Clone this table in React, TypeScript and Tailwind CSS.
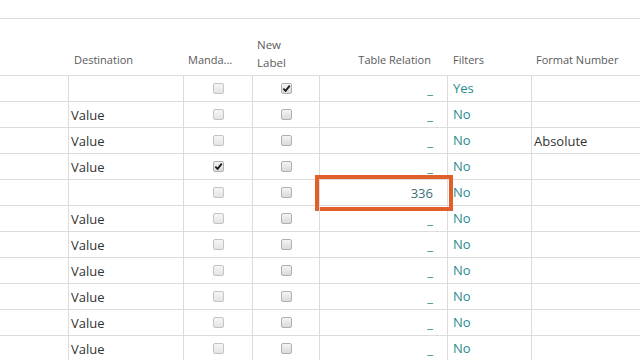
// Field mapping grid — mandatory / new label flags, relation and filters per row.

type Row = {
  dest: string
  mandatory: boolean
  newLabel: boolean
  relation: string
  filter: string
  format: string
  highlight?: boolean
}

const ROWS: Row[] = [
  { dest: '', mandatory: false, newLabel: true, relation: '_', filter: 'Yes', format: '' },
  { dest: 'Value', mandatory: false, newLabel: false, relation: '_', filter: 'No', format: '' },
  { dest: 'Value', mandatory: false, newLabel: false, relation: '_', filter: 'No', format: 'Absolute' },
  { dest: 'Value', mandatory: true, newLabel: false, relation: '_', filter: 'No', format: '' },
  { dest: '', mandatory: false, newLabel: false, relation: '336', filter: 'No', format: '', highlight: true },
  { dest: 'Value', mandatory: false, newLabel: false, relation: '_', filter: 'No', format: '' },
  { dest: 'Value', mandatory: false, newLabel: false, relation: '_', filter: 'No', format: '' },
  { dest: 'Value', mandatory: false, newLabel: false, relation: '_', filter: 'No', format: '' },
  { dest: 'Value', mandatory: false, newLabel: false, relation: '_', filter: 'No', format: '' },
  { dest: 'Value', mandatory: false, newLabel: false, relation: '_', filter: 'No', format: '' },
  { dest: 'Value', mandatory: false, newLabel: false, relation: '_', filter: 'No', format: '' },
]

function Checkbox({ checked, faded }: { checked: boolean; faded?: boolean }) {
  return (
    <span
      className={
        'flex size-[11px] items-center justify-center rounded-[2px] border ' +
        (faded
          ? 'border-[#c4c4c4] bg-gradient-to-b from-[#f6f6f6] to-[#e4e4e4]'
          : 'border-[#b0b0b0] bg-gradient-to-b from-[#f4f4f4] to-[#dadada]')
      }
    >
      {checked && (
        <svg viewBox="0 0 10 10" className="size-[9px]">
          <path d="M1.5 5.2 L4 7.6 L8.6 1.8" fill="none" stroke="#1a1a1a" strokeWidth="2" />
        </svg>
      )}
    </span>
  )
}

export default function App() {
  return (
    <div
      className="h-[360px] w-[640px] overflow-hidden bg-white text-[#333]"
      style={{ fontFamily: '"Open Sans", "Noto Sans", sans-serif' }}
    >
      <div className="h-[18px]" />
      <div className="flex h-[58px] items-end border-y border-[#dcdcdc] pb-[6px] text-[11px] leading-[18px] text-[#5a5a5a]">
        <div className="w-[68px] shrink-0" />
        <div className="w-[115px] shrink-0 pl-[6px]">Destination</div>
        <div className="w-[69px] shrink-0 pl-[5px]">Manda...</div>
        <div className="-mb-[3px] w-[67px] shrink-0 pl-[5px] text-[11.5px]">
          New
          <br />
          Label
        </div>
        <div className="w-[128px] shrink-0 pr-[16px] text-right">Table Relation</div>
        <div className="w-[84px] shrink-0 pl-[6px]">Filters</div>
        <div className="w-[109px] shrink-0 pl-[5px]">Format Number</div>
      </div>

      {ROWS.map((r, i) => (
        <div key={i} className="flex h-[26px] border-b border-[#dcdcdc] text-[13px]">
          <div className="w-[68px] shrink-0" />
          <div className="flex w-[115px] shrink-0 items-center border-l border-[#dcdcdc] pl-[2px] pt-[2px]">
            {r.dest}
          </div>
          <div className="flex w-[69px] shrink-0 items-center justify-center border-l border-[#dcdcdc] pb-[1px]">
            <Checkbox checked={r.mandatory} faded={!r.mandatory} />
          </div>
          <div className="flex w-[67px] shrink-0 items-center justify-center border-l border-[#dcdcdc] pb-[1px]">
            <Checkbox checked={r.newLabel} />
          </div>
          <div className="relative flex w-[128px] shrink-0 items-center justify-end border-l border-[#dcdcdc] pr-[14px] pt-[2px] text-[#2a8b8f]">
            {r.highlight ? <span className="text-[#3a6f76]">{r.relation}</span> : r.relation}
            {r.highlight && (
              <div className="pointer-events-none absolute -bottom-[6px] -left-[5px] -right-[6px] -top-[5px] border-4 border-[#e05f2b]" />
            )}
          </div>
          <div className="flex w-[84px] shrink-0 items-center border-l border-[#dcdcdc] pl-[5px] text-[#2a8b8f]">
            {r.filter}
          </div>
          <div className="flex w-[109px] shrink-0 items-center border-l border-[#dcdcdc] pl-[2px] pt-[2px]">
            {r.format}
          </div>
        </div>
      ))}
    </div>
  )
}
